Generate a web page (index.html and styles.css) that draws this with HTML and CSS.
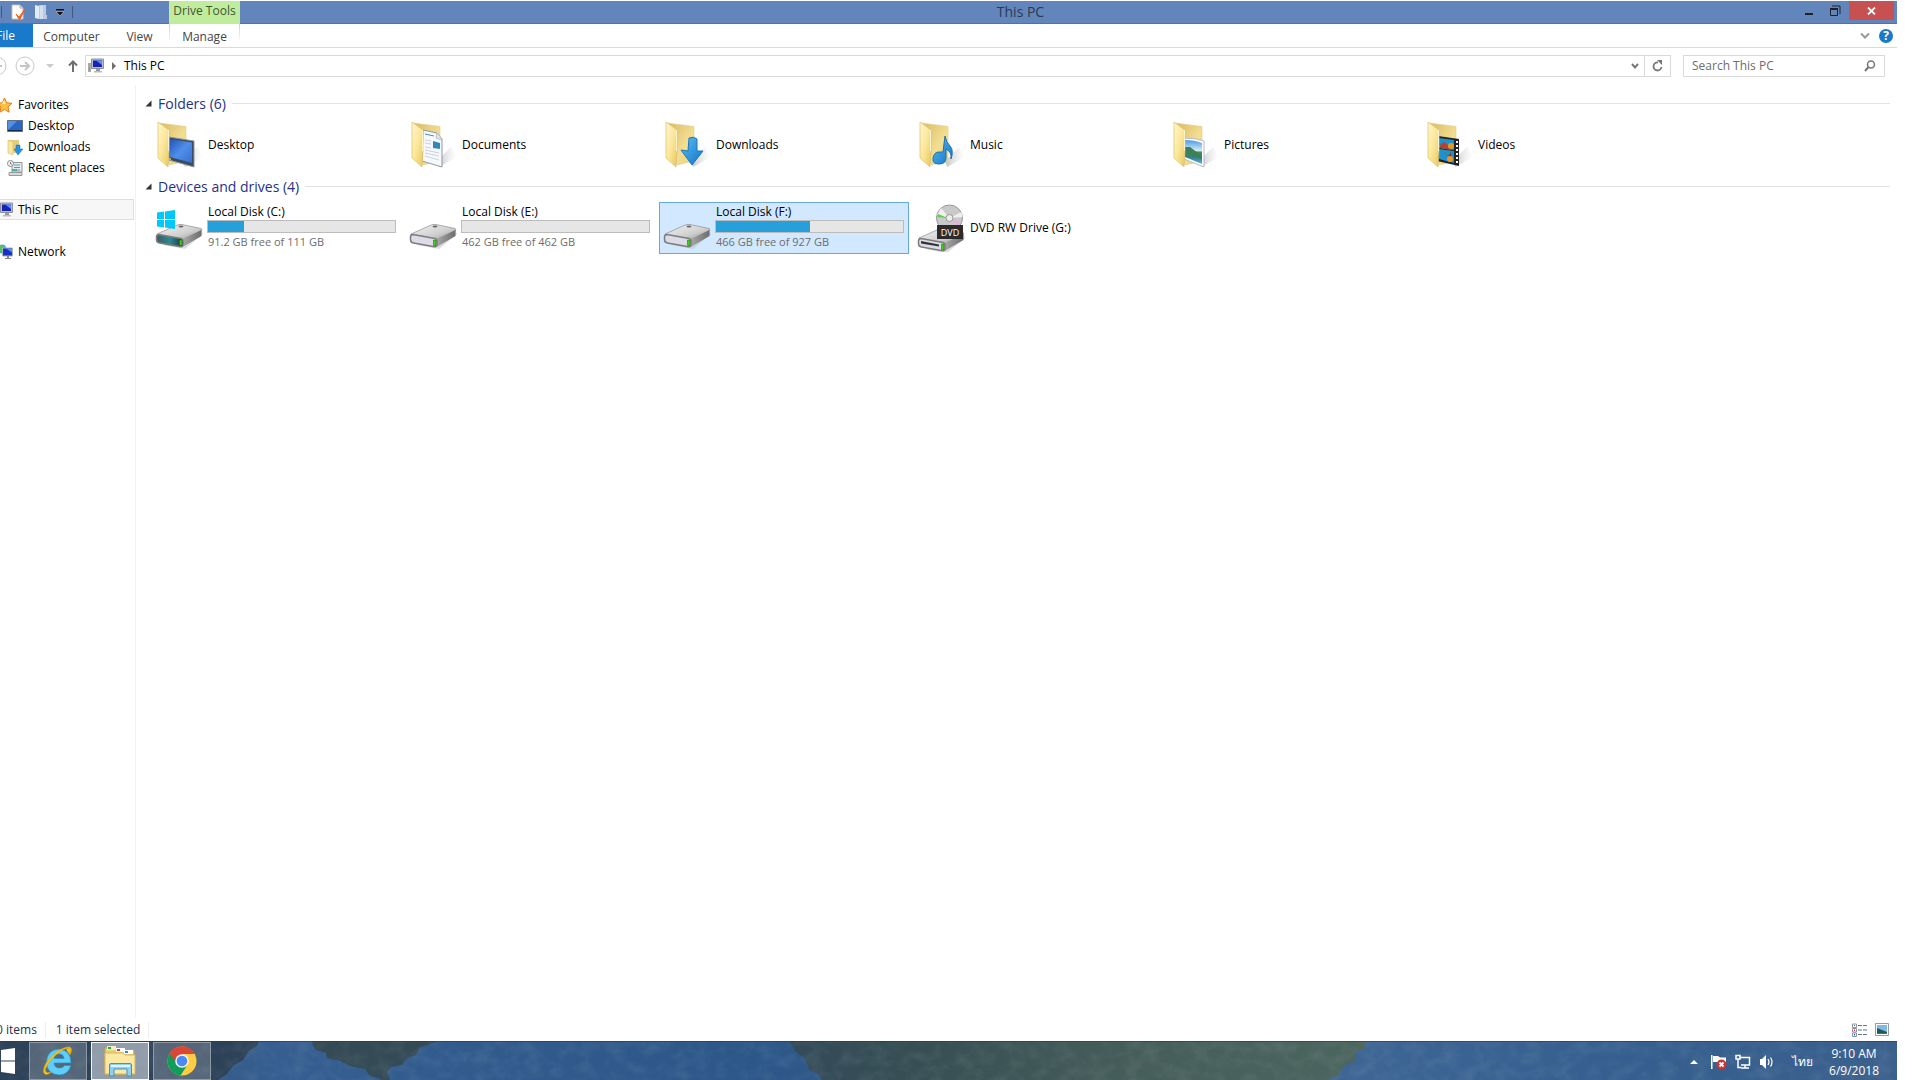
FILE: index.html
```html
<!DOCTYPE html>
<html lang="en">
<head>
<meta charset="utf-8">
<title>This PC</title>
<link rel="stylesheet" href="styles.css">
</head>
<body>
<svg class="defs" aria-hidden="true">
  <defs>
    <linearGradient id="flap" x1="0" y1="0" x2="1" y2="1"><stop offset="0" stop-color="#fff6cf"/><stop offset=".5" stop-color="#fbe79a"/><stop offset="1" stop-color="#e8c65f"/></linearGradient>
    <linearGradient id="back" x1="0" y1="0" x2="1" y2="1"><stop offset="0" stop-color="#d9bb63"/><stop offset=".6" stop-color="#f3de92"/><stop offset="1" stop-color="#ecd27c"/></linearGradient>
    <linearGradient id="screen" x1="0" y1="0" x2="1" y2="1"><stop offset="0" stop-color="#2454b8"/><stop offset=".5" stop-color="#4f8eea"/><stop offset="1" stop-color="#3a6fd0"/></linearGradient>
    <linearGradient id="arrow" x1="0" y1="0" x2="1" y2="1"><stop offset="0" stop-color="#5cc0f5"/><stop offset="1" stop-color="#1272c4"/></linearGradient>
    <linearGradient id="metal" x1="0" y1="0" x2="1" y2="1"><stop offset="0" stop-color="#f4f4f4"/><stop offset=".6" stop-color="#cfcfcf"/><stop offset="1" stop-color="#8c8c8c"/></linearGradient>
    <linearGradient id="side" x1="0" y1="0" x2="1" y2="0"><stop offset="0" stop-color="#aaa"/><stop offset="1" stop-color="#6d6d6d"/></linearGradient>
    <linearGradient id="teal" x1="0" y1="0" x2="1" y2="0"><stop offset="0" stop-color="#3d5866"/><stop offset=".5" stop-color="#2b8a93"/><stop offset="1" stop-color="#20343c"/></linearGradient>
    <linearGradient id="sky" x1="0" y1="0" x2="0" y2="1"><stop offset="0" stop-color="#4c9be0"/><stop offset=".45" stop-color="#d7ecf5"/><stop offset=".5" stop-color="#4d8a58"/><stop offset=".7" stop-color="#2f7d86"/><stop offset="1" stop-color="#5fb0d8"/></linearGradient>
    <linearGradient id="shade" x1="0" y1="0" x2="1" y2="0"><stop offset="0" stop-color="#999" stop-opacity=".6"/><stop offset="1" stop-color="#ccc" stop-opacity="0"/></linearGradient>
    <symbol id="folder" viewBox="0 0 48 48">
      <path d="M30 46 48 36 42 26 28 40z" fill="url(#shade)"/>
      <path d="M4 2 31 5.500V40L14 44z" fill="url(#back)" stroke="#e2cc84" stroke-width=".6"/>
    </symbol>
    <symbol id="folder-front" viewBox="0 0 48 48">
      <path d="M3 1 14 9V30L13 46 3 37z" fill="url(#flap)" stroke="#dcc068" stroke-width=".7"/>
      <path d="M13.500 9V30" stroke="#fffbe4" stroke-width=".8"/>
    </symbol>
    <symbol id="pc" viewBox="0 0 16 16">
      <path d="M0 5h3v9H0z" fill="#a8aaa6"/><path d="M1 10h1v2H1z" fill="#41c424"/>
      <path d="M3.500 1h12v9.500h-12z" fill="#b9bfca" stroke="#8c929c"/><path d="M5 2.500h9v6.500H5z" fill="#1523b9"/><path d="M8 2.500h6V7z" fill="#5d8cf0"/>
      <path d="M8 11h4v2H8z" fill="#999"/><path d="M6 13h8v1.500H6z" fill="#bbb"/>
    </symbol>
    <symbol id="hdd" viewBox="0 0 48 48">
      <path d="M8 41 30 45 48 30 46 25z" fill="#bbb" opacity=".5"/>
      <path d="M2 30 21 21.500Q24 20 27 20.500L46 24.500Q47.500 25 46.500 26.500L27 36 3 32z" fill="url(#metal)" stroke="#8d8d8d" stroke-width=".7"/>
      <path d="M46.500 26V32L28.500 42.500 27 35.500z" fill="url(#side)"/>
      <path class="face" d="M4 30.500 26 34.500Q28 35 28 37V41.500Q27.500 43 25.500 42.700L4.500 39Q1.500 38.500 1.500 35.500V33Q1.500 30.500 4 30.500z" stroke="#7d7d7d" stroke-width="1.500"/>
      <path d="M24.500 36h2.500V41.500H24.500z" fill="#38d512" stroke="#14610a" stroke-width=".5"/>
      <ellipse cx="26" cy="22.500" rx="2.500" ry="1" fill="#666"/>
    </symbol>
  </defs>
</svg>
<div class="desktop">
  <main class="window">
    <header class="titlebar">
      <div class="quick">
        <span class="rule"></span>
        <button class="plain" aria-label="Properties"><svg width="15" height="16" viewBox="0 0 15 16"><path d="M1 1h8l3 3v11H1z" fill="#fffdf6" stroke="#bfc0c0"/><path d="M9 1v3h3" fill="#ddd" stroke="#aaa"/><path d="M5 10l3 3 6-8-5 10H8z" fill="#e8622c" stroke="#e8622c"/></svg></button>
        <button class="plain" aria-label="New folder"><svg width="14" height="16" viewBox="0 0 14 16"><path d="M1 1l4 1v13l-4-1z" fill="#e3ecf7"/><path d="M5 1h7v10h1v4H5z" fill="#b9cbe3"/><path d="M6 2h3v13H6z" fill="#d5e0ef"/></svg></button>
        <button class="plain" aria-label="Customize"><svg width="8" height="7" viewBox="0 0 8 7"><path d="M0 0h8v1.500H0z" fill="#111"/><path d="M0 2.500h8L4 7z" fill="#111" stroke="#dfe7f2" stroke-width=".5"/></svg></button>
        <span class="rule"></span>
      </div>
      <div class="context-tab">Drive Tools</div>
      <h1 class="title">This PC</h1>
      <div class="controls">
        <button class="plain ctl" aria-label="Minimize"><svg width="10" height="12" viewBox="0 0 10 12"><path d="M1 8h8v2H1z" fill="#222"/></svg></button>
        <button class="plain ctl" aria-label="Restore"><svg width="12" height="12" viewBox="0 0 12 12"><path d="M3 1h8v8M1.500 4h7v6.500h-7z" fill="none" stroke="#222"/><path d="M1 3h8v2H1z" fill="#222"/></svg></button>
        <button class="plain close" aria-label="Close"><svg width="9" height="8" viewBox="0 0 9 8"><path d="M1 .5l7 7M8 .5l-7 7" stroke="#fff" stroke-width="1.800"/></svg></button>
      </div>
    </header>
    <nav class="ribbon" aria-label="Ribbon">
      <button class="file">File</button>
      <button class="tab computer">Computer</button>
      <button class="tab view">View</button>
      <button class="tab manage">Manage</button>
      <div class="help">
        <button class="plain" aria-label="Expand ribbon"><svg width="10" height="8" viewBox="0 0 10 8"><path d="M1 1.500l4 4 4-4" fill="none" stroke="#999" stroke-width="2"/></svg></button>
        <button class="plain question" aria-label="Help">?</button>
      </div>
    </nav>
    <div class="addressbar">
      <button class="plain" aria-label="Back"><svg width="20" height="20" viewBox="0 0 20 20"><circle cx="10" cy="10" r="9" fill="none" stroke="#c9c9c9"/><path d="M15 10H6m4-4l-4 4 4 4" fill="none" stroke="#c4c4c4" stroke-width="2"/></svg></button>
      <button class="plain" aria-label="Forward"><svg width="20" height="20" viewBox="0 0 20 20"><circle cx="10" cy="10" r="9" fill="none" stroke="#c9c9c9"/><path d="M5 10h9m-4-4l4 4-4 4" fill="none" stroke="#c4c4c4" stroke-width="2"/></svg></button>
      <button class="plain recent" aria-label="Recent locations"><svg width="8" height="4" viewBox="0 0 8 4"><path d="M0 0h8L4 4z" fill="#ccc"/></svg></button>
      <button class="plain up" aria-label="Up"><svg width="10" height="12" viewBox="0 0 10 12"><path d="M5 12V1.500M1 5.500l4-4 4 4" fill="none" stroke="#6f6f6f" stroke-width="2"/></svg></button>
      <div class="path">
        <svg width="16" height="16" viewBox="0 0 16 16"><use href="#pc"/></svg>
        <svg width="4" height="8" viewBox="0 0 4 8"><path d="M0 0v8l4-4z" fill="#6f6f6f"/></svg>
        <a href="#pc">This PC</a>
        <button class="plain drop" aria-label="Previous locations"><svg width="8" height="8" viewBox="0 0 8 8"><path d="M1 2l3 3.500L7 2" fill="none" stroke="#777" stroke-width="2"/></svg></button>
      </div>
      <button class="plain refresh" aria-label="Refresh"><svg width="11" height="12" viewBox="0 0 11 12"><path d="M6 2.500A4 4 0 1 0 9.500 7" fill="none" stroke="#777" stroke-width="1.800"/><path d="M5 0h5v5z" fill="#777"/></svg></button>
      <form class="search">
        <input type="text" aria-label="Search This PC" placeholder="Search This PC">
        <svg width="12" height="12" viewBox="0 0 12 12"><circle cx="7" cy="4.500" r="3.500" fill="none" stroke="#777" stroke-width="1.500"/><path d="M4.500 7L1 11" stroke="#777" stroke-width="2"/></svg>
      </form>
    </div>
    <div class="body">
      <nav class="tree" aria-label="Navigation pane">
        <a class="node" href="#favorites"><svg width="17" height="16" viewBox="0 0 17 16"><path d="M8.500 1l2.200 4.800 5.300.5-4 3.600 1.200 5.300-4.700-2.700-4.700 2.700L5 9.900 1 6.300l5.300-.5z" fill="#ffc23c" stroke="#e27a1c"/><path d="M8.500 3l1 4-4-.2z" fill="#fff1ae"/></svg>Favorites</a>
        <a class="node sub" href="#desktop"><svg width="16" height="16" viewBox="0 0 16 16"><path d="M.5 2.500h15v11H.5z" fill="#2a66c4" stroke="#5a6f85"/><path d="M1 3h9L2 11H1z" fill="#5690e0"/><path d="M1 12h14v1H1z" fill="#1a2c48"/></svg>Desktop</a>
        <a class="node sub" href="#downloads"><svg width="16" height="16" viewBox="0 0 16 16"><path d="M1 1h11v13H4z" fill="#e6cd7e"/><path d="M1 1l5 2v13l-5-2z" fill="#f9e6a0" stroke="#d9bd66" stroke-width=".6"/><path d="M9 6h4v4h3l-5 6-4-6h2z" fill="#2593e3" stroke="#176eb5" stroke-width=".5"/></svg>Downloads</a>
        <a class="node sub" href="#recent"><svg width="16" height="16" viewBox="0 0 16 16"><path d="M5 2.500h10V12H5z" fill="#e8ecef" stroke="#8c9498"/><path d="M7 5h6M7 7.500h6M9 10h4" stroke="#5999bd"/><path d="M2 12.500h13v3H2z" fill="#d8d8d8" stroke="#999"/><path d="M5 9h5v2H5z" fill="#43b5a0"/><circle cx="3.500" cy="3.500" r="3" fill="#f4f4f4" stroke="#888"/><path d="M3.500 2v2h1.500" fill="none" stroke="#666" stroke-width=".8"/></svg>Recent places</a>
        <a class="node root current" href="#pc"><svg width="16" height="16" viewBox="0 0 16 16"><use href="#pc"/></svg>This PC</a>
        <a class="node root" href="#network"><svg width="16" height="16" viewBox="0 0 16 16"><circle cx="5" cy="5" r="4.500" fill="#38a9d8"/><path d="M1 4l3-3 3 1-2 3-1 4z" fill="#58c456"/><path d="M5.500 4h10v8h-10z" fill="#1732bd" stroke="#aab3c0"/><path d="M9 4.500h6v4z" fill="#5d8cf0"/><path d="M10 12h2v2h-2zM8 14h6v1H8z" fill="#888"/></svg>Network</a>
      </nav>
      <section class="content">
        <h2 class="group"><svg width="7" height="7" viewBox="0 0 7 7"><path d="M6.500.5v6h-6z" fill="#333"/></svg>Folders (6)</h2>
        <div class="tiles">
          <a class="tile" href="#desktop"><svg width="48" height="48" viewBox="0 0 48 48"><use href="#folder"/><path d="M14 16L39 20V46L14 39z" fill="#3c4a5c" stroke="#8796a8"/><path d="M15 18l22 3.500V42L15 36z" fill="url(#screen)"/><path d="M14 37l2 .5v1.500l-2-.5z" fill="#f0d020"/><use href="#folder-front"/></svg><span>Desktop</span></a>
          <a class="tile" href="#documents"><svg width="48" height="48" viewBox="0 0 48 48"><use href="#folder"/><path d="M14 9L28 12 33 18V46L13 40z" fill="#f6f8fc" stroke="#8f99a6"/><path d="M28 12l-1 5 6 2" fill="#dfe5ee" stroke="#9aa4b2" stroke-width=".6"/><path d="M16 13l9 2" stroke="#3a9aa8"/><path d="M24 20l7 2v6l-7-1z" fill="#3187bd"/><path d="M16 19l6 1M16 22l6 1M16 26l6 1M16 29l14 3M16 32l14 3M16 35l14 4" stroke="#ccd3dd"/><use href="#folder-front"/></svg><span>Documents</span></a>
          <a class="tile" href="#downloads"><svg width="48" height="48" viewBox="0 0 48 48"><use href="#folder"/><path d="M26 17q5-2 8 1v12h6L29 44 18 29l7 1z" fill="url(#arrow)" stroke="#1b78bd"/><use href="#folder-front"/></svg><span>Downloads</span></a>
          <a class="tile" href="#music"><svg width="48" height="48" viewBox="0 0 48 48"><use href="#folder"/><path d="M28 15q1 6 5 10t1 13q1-7-5-10v9q0 6-7 6t-6-6 6-6h4z" fill="url(#arrow)" stroke="#1f6fb2"/><use href="#folder-front"/></svg><span>Music</span></a>
          <a class="tile" href="#pictures"><svg width="48" height="48" viewBox="0 0 48 48"><use href="#folder"/><path d="M13 17q12 0 20 3V46L13 38z" fill="#fff" stroke="#b3bcc5"/><path d="M14 19q10 0 17 3V43L14 36z" fill="url(#sky)"/><path d="M14 26l5 0 12 9v3L14 32z" fill="#3d8055"/><use href="#folder-front"/></svg><span>Pictures</span></a>
          <a class="tile" href="#videos"><svg width="48" height="48" viewBox="0 0 48 48"><use href="#folder"/><path d="M13 15L34 18V45L12 40z" fill="#222"/><path d="M14 17l15 2v10l-15-2zM14 28l15 2v12l-15-4z" fill="#1c93cf"/><path d="M15 24l4-3 5 4 2 4-11-2z" fill="#b3442b"/><circle cx="26" cy="25" r="3" fill="#e59a25"/><path d="M18 30l5 5 3-4 1 9z" fill="#a8301f"/><circle cx="25" cy="38" r="3" fill="#e59a25"/><path d="M32 20v24" stroke="#fff" stroke-width="2" stroke-dasharray="2 2"/><use href="#folder-front"/></svg><span>Videos</span></a>
        </div>
        <h2 class="group"><svg width="7" height="7" viewBox="0 0 7 7"><path d="M6.500.5v6h-6z" fill="#333"/></svg>Devices and drives (4)</h2>
        <div class="tiles">
          <a class="tile" href="#c"><svg class="system" width="48" height="48" viewBox="0 0 48 48"><use href="#hdd"/><path d="M2 8.500L9 7.500V15H2zM10 7.500L20 6v9H10zM2 16h7v7.500l-7-1zM10 16h10v9l-10-1.500z" fill="#00c8fa"/></svg><span class="drive"><span>Local Disk (C:)</span><span class="bar"><span class="fill" style="width:19%"></span></span><span class="free">91.2 GB free of 111 GB</span></span></a>
          <a class="tile" href="#e"><svg width="48" height="48" viewBox="0 0 48 48"><use href="#hdd"/></svg><span class="drive"><span>Local Disk (E:)</span><span class="bar"><span class="fill" style="width:0%"></span></span><span class="free">462 GB free of 462 GB</span></span></a>
          <a class="tile selected" href="#f"><svg width="48" height="48" viewBox="0 0 48 48"><use href="#hdd"/></svg><span class="drive"><span>Local Disk (F:)</span><span class="bar"><span class="fill" style="width:50%"></span></span><span class="free">466 GB free of 927 GB</span></span></a>
          <a class="tile" href="#g"><svg width="48" height="48" viewBox="0 0 48 48"><g transform="translate(0 4)"><use href="#hdd"/><path d="M4 33l18 3.500v2L4 35.500z" fill="#333"/></g><circle cx="32.500" cy="14" r="13" fill="#c9c9c9" stroke="#999"/><path d="M32.500 14L20 11l4-7zM32.500 14l12-6 1 5z" fill="#efefef"/><path d="M31 14l-10-4-1 3z" fill="#5fd04d"/><path d="M33 15l10 4-2 4z" fill="#e5b3d4"/><circle cx="32.500" cy="14" r="3.500" fill="#eee" stroke="#999"/><path d="M20 21h26v14H20z" fill="#2b2b2b"/><text x="33" y="32" text-anchor="middle" class="dvd">DVD</text></svg><span>DVD RW Drive (G:)</span></a>
        </div>
      </section>
    </div>
    <footer class="status">
      <span class="count">0 items</span><span class="count">1 item selected</span>
      <div class="views">
        <button class="plain" aria-label="Details"><svg width="16" height="14" viewBox="0 0 16 14"><path d="M.5 1h4v3.500h-4zM.5 5.500h4V9h-4zM.5 10h4v3.500h-4z" fill="#fff" stroke="#8a94a6"/><path d="M2 2h1v1H2zM2 11h1v1.500H2z" fill="#2456c8"/><path d="M2 6.500h1V8H2z" fill="#d22"/><path d="M6 2.500h4M11 2.500h4M6 7h4M11 7h4M6 11.500h4M11 11.500h4" stroke="#66758a"/></svg></button>
        <button class="plain" aria-label="Large icons"><svg width="14" height="13" viewBox="0 0 14 13"><path d="M.5.5h13v12H.5z" fill="#fff" stroke="#8f9cab"/><path d="M2 2h10v9H2z" fill="#7fb9e6"/><path d="M2 5l10 4v1H2z" fill="#1d5c52"/><path d="M2 10h10v1H2z" fill="#2a6fb8"/></svg></button>
      </div>
    </footer>
  </main>
  <footer class="taskbar">
    <svg class="wallpaper" viewBox="0 0 1905 39" preserveAspectRatio="none" aria-hidden="true">
      <defs>
        <filter id="grain" x="0" y="0" width="1" height="1"><feTurbulence type="fractalNoise" baseFrequency=".06 .08" numOctaves="4" seed="4"/><feColorMatrix values="0 0 0 0 .75  0 0 0 0 .8  0 0 0 0 .8  .9 0 0 0 -.36"/></filter>
        <linearGradient id="sea"><stop offset="0" stop-color="#33506f"/><stop offset=".15" stop-color="#365e90"/><stop offset=".4" stop-color="#2c5788"/><stop offset=".72" stop-color="#3e6594"/><stop offset=".86" stop-color="#355f8f"/><stop offset="1" stop-color="#3b608c"/></linearGradient>
        <linearGradient id="reef"><stop offset="0" stop-color="#344b5a"/><stop offset=".2" stop-color="#364e54"/><stop offset=".6" stop-color="#465e5a"/><stop offset="1" stop-color="#4b655f"/></linearGradient>
      </defs>
      <path d="M0 0h1905v39H0z" fill="url(#sea)"/>
      <path d="M0 0H267l-2 5-8 5-6 9-10 6-6 8-9 6H0z" fill="#2d4258"/>
      <path d="M320 0H446l-10 4-8 2-4 8-8 3-7 7-10 2-4 5 3 8-6 3-5-5-9-2-5-7-15-3-9-5-14-3-1-5-10-3-3-5z" fill="#344b55"/>
      <path d="M797 0H1374l-1 8-9 3v9l-12 5-6 10-10 4H830l-4-6-8-3-5-12-9-7z" fill="url(#reef)"/>
      <path d="M0 0h1905v39H0z" filter="url(#grain)" opacity=".2"/>
      <path d="M0 0h1905v1H0z" fill="#243c56" opacity=".6"/>
    </svg>
    <button class="plain start" aria-label="Start"><svg width="23" height="26" viewBox="0 0 23 26"><path d="M0 3.500L8 2.300V12.500H0zM9 2.100L23 0V12.500H9zM0 13.500h8v10.200l-8-1.200zM9 13.500h14V26L9 23.900z" fill="#fff"/></svg></button>
    <button class="app" aria-label="Internet Explorer"><svg width="32" height="32" viewBox="0 0 32 32"><path d="M29 18H12q.5 5 5.500 5 3.500 0 5-2.500H29Q26 30 17 30 4.500 29 4.500 17 5 5 17 4 29 5 29 18zM12 13.500H22Q21.500 9 17 9t-5 4.500z" fill="#5fcdf5" stroke="#1c8fc9" stroke-width=".7" fill-rule="evenodd"/><path d="M24 4Q32 0 27.500 9 31-1 19 6 7 14 3.500 24q-1 5 6 3Q3 32 1.500 27 1 19 11 10T28 2q3 2 0 8" fill="#f9c41c" stroke="#d79a0d" stroke-width=".5"/></svg></button>
    <button class="app active" aria-label="File Explorer"><svg width="32" height="32" viewBox="0 0 32 32"><path d="M1 3h10l2 2h17v24H1z" fill="#ead07b" stroke="#c9a44c"/><path d="M3 1h9v4H3z" fill="#f6ecd0"/><path d="M4 2h3v2H4z" fill="#1fae38"/><path d="M12 3h9v4h-9z" fill="#fff"/><path d="M13 4h3v2h-3z" fill="#d9382c"/><path d="M20 5h9v4h-9z" fill="#fff"/><path d="M21 6h3v2h-3z" fill="#2a8fe0"/><path d="M1 8h18l2 2h10v19H1z" fill="#fae9a5" stroke="#d8b65d"/><path d="M5.500 31V20q0-1.500 1.500-1.500h19q1.500 0 1.500 1.500v11h-4.500v-7H10v7z" fill="#8fd0ee" stroke="#3f95c2"/><path d="M7 21h19" stroke="#def4ff" stroke-width="2"/></svg></button>
    <button class="app" aria-label="Google Chrome"><svg width="30" height="30" viewBox="0 0 30 30"><circle cx="15" cy="15" r="14.500" fill="#ffcd42"/><path d="M15 15L2.500 7.500A14.500 14.500 0 0 0 13.500 29.500L21 18z" fill="#109d59"/><path d="M15 15L2.500 7.500A14.500 14.500 0 0 1 28 8H15z" fill="#d94738"/><path d="M2.500 7.500L9 18l6-10z" fill="#d94738"/><path d="M2.500 7.500L9 18v-3z" fill="#109d59"/><circle cx="15" cy="15" r="6.800" fill="#f3f3f3"/><circle cx="15" cy="15" r="5.300" fill="#4a8af4"/></svg></button>
    <div class="tray">
      <button class="plain" aria-label="Show hidden icons"><svg width="8" height="4" viewBox="0 0 8 4"><path d="M0 4h8L4 0z" fill="#fff"/></svg></button>
      <button class="plain" aria-label="Action Center"><svg width="17" height="16" viewBox="0 0 17 16"><path d="M1 1h1.500v14H1z" fill="#fff"/><path d="M3 2h5l2 1.500h6V9h-6L8 8H3z" fill="#fff"/><circle cx="11.500" cy="10.500" r="5" fill="#d9302c"/><path d="M9.500 8.500l4 4m0-4l-4 4" stroke="#fff" stroke-width="1.800"/></svg></button>
      <button class="plain" aria-label="Network status"><svg width="16" height="16" viewBox="0 0 16 16"><path d="M5 3.500h9.500v7.500H6M10 11v3M6 14h8M1 1.500h4V5H1zM3 5v8.500h3" fill="none" stroke="#fff" stroke-width="1.500"/></svg></button>
      <button class="plain" aria-label="Volume"><svg width="16" height="16" viewBox="0 0 16 16"><path d="M1 5h2l4-4v14l-4-4H1z" fill="#fff"/><path d="M9 5q2 3 0 6M11.500 3.500q3 4.500 0 9" fill="none" stroke="#fff" stroke-width="1.200"/></svg></button>
      <button class="plain lang" lang="th">ไทย</button>
      <button class="plain clock">9:10 AM<br>6/9/2018</button>
    </div>
  </footer>
</div>
</body>
</html>
```
FILE: styles.css
```css
* { box-sizing: border-box; }
body { margin: 0; background: #fff; color: #000; font: 12px/16px "Open Sans", "Noto Sans", sans-serif; overflow: hidden; }
button, input { font: inherit; color: inherit; }
a { color: inherit; text-decoration: none; }
svg { display: block; flex: none; }
.defs { position: absolute; width: 0; height: 0; }
.plain { display: flex; align-items: center; justify-content: center; padding: 0; border: 0; background: none; }

/* The desktop hangs a little over the left edge of the viewport. */
.desktop { display: flex; flex-direction: column; min-height: 100vh; margin: 0 23px 0 -8px; padding-top: 1px; }
.window { flex: 1; display: flex; flex-direction: column; }

.titlebar { display: flex; height: 23px; background: #6286bb; border-bottom: 1px solid #4f73a8; }
.quick { display: flex; align-items: center; gap: 8px; width: 177px; padding-left: 9px; }
.quick .rule { width: 1px; height: 12px; background: #42597c; }
.quick .rule:first-child { margin-right: 1px; }
.context-tab { width: 71px; height: 23px; background: #bfed9b; color: #42543a; text-align: center; line-height: 20px; }
.title { flex: 1; margin: 0; padding-left: 5px; font-size: 14px; line-height: 22px; font-weight: 400; text-align: center; color: #2b3a50; }
.controls { display: flex; align-items: flex-start; padding-right: 3px; }
.ctl { width: 26px; height: 19px; }
.close { width: 45px; height: 19px; margin-left: 1px; background: #c75050; }

.ribbon { display: flex; height: 24px; border-bottom: 1px solid #dadada; color: #444; }
.ribbon button { border: 0; background: none; }
.ribbon .file { width: 41px; padding: 0 0 0 4px; text-align: left; background: #1979ca; color: #fff; }
.ribbon .tab { padding: 3px 0 0; }
.computer { width: 77px; }
.view { width: 59px; }
.ribbon .manage { width: 71px; border: solid; border-width: 0 1px; border-image: linear-gradient(#ccc, #fff 80%) 1; }
.help { display: flex; align-items: center; gap: 9px; margin-left: auto; padding-right: 4px; }
.ribbon .question { width: 14px; height: 14px; border-radius: 50%; background: #1979ca; color: #fff; font-weight: 700; line-height: 14px; }

.addressbar { display: flex; align-items: center; height: 37px; padding: 0 12px 1px 0; }
.addressbar > button:first-child { margin-left: -5px; }
.addressbar > button:nth-child(2) { margin-left: 8px; }
.recent { margin-left: 11px; }
.up { margin-left: 14px; }
.path { flex: 1; display: flex; align-items: center; gap: 8px; height: 22px; margin-left: 7px; padding: 0 5px 0 2px; border: 1px solid #d9d9d9; }
.drop { margin-left: auto; }
.refresh { width: 26px; height: 22px; border: 1px solid #d9d9d9; border-left: 0; }
.search { display: flex; align-items: center; width: 202px; height: 22px; margin-left: 12px; padding: 0 8px; border: 1px solid #d9d9d9; }
.search input { flex: 1; min-width: 0; padding: 0; border: 0; background: none; outline: 0; }
.search input::placeholder { color: #6d6d6d; opacity: 1; }

.body { flex: 1; display: flex; }
.tree { width: 144px; padding-top: 9px; border-right: 1px solid #f2f2f2; }
.node { display: flex; align-items: center; gap: 5px; height: 21px; padding-left: 4px; }
.sub { padding-left: 15px; }
.root { margin-top: 21px; padding-left: 5px; }
.current { width: 142px; padding-left: 4px; background: #f7f7f7; border: 1px solid #dedede; }
.content { flex: 1; padding: 3px 7px 0 9px; }
.group { display: flex; align-items: center; gap: 6px; height: 31px; margin: 0; font-size: 14px; line-height: 20px; font-weight: 400; color: #1e3287; }
.group::after { content: ""; flex: 1; height: 1px; background: #e2e2e2; }
.tiles { display: grid; grid-template-columns: repeat(auto-fill, 250px); gap: 4px; padding-left: 6px; }
.tile { display: flex; align-items: center; gap: 4px; height: 52px; padding: 0 4px 0 3px; border: 1px solid transparent; }
.tile > span:not(.drive) { padding-left: 1px; }
.selected { background: #d1e8ff; border-color: #66a7e8; }
.drive { flex: 1; display: flex; flex-direction: column; padding-bottom: 2px; }
.drive > span:first-child { padding-left: 1px; }
.bar { height: 13px; background: #e6e6e6; border: 1px solid #bcbcbc; }
.fill { display: block; height: 11px; background: #26a0da; }
.free { padding: 1px 0 0 1px; font-size: 11px; color: #6d6d6d; }
.face { fill: var(--face, #dcdce8); }
.system { --face: url(#teal); }
.dvd { font: 9px "Open Sans", sans-serif; fill: #fff; }

.status { display: flex; align-items: center; height: 23px; color: #1e3250; }
.count { padding: 0 8px 0 10px; border-right: 1px solid #eee; }
.count:first-child { padding-left: 4px; }
.views { display: flex; align-items: center; gap: 7px; margin-left: auto; padding-right: 8px; }

.taskbar { position: relative; display: flex; gap: 4px; height: 39px; color: #fff; }
.taskbar > * { position: relative; }
.taskbar .wallpaper { position: absolute; inset: 0; width: 100%; height: 100%; }
.start { width: 33px; padding-right: 10px; }
.app { display: flex; align-items: center; justify-content: center; width: 58px; height: 38px; margin-top: 1px; padding: 0; border: 1px solid #8f9aa5; background: rgba(170, 180, 190, .32); }
.active { border-color: #f4f6f8; background: rgba(205, 212, 220, .62); }
.tray { display: flex; align-items: center; gap: 8px; margin-left: auto; padding: 2px 18px 0 0; }
.tray > button:first-child { margin-right: 4px; }
.lang { margin-left: 9px; }
.clock { margin-left: 8px; line-height: 17px; }
```
